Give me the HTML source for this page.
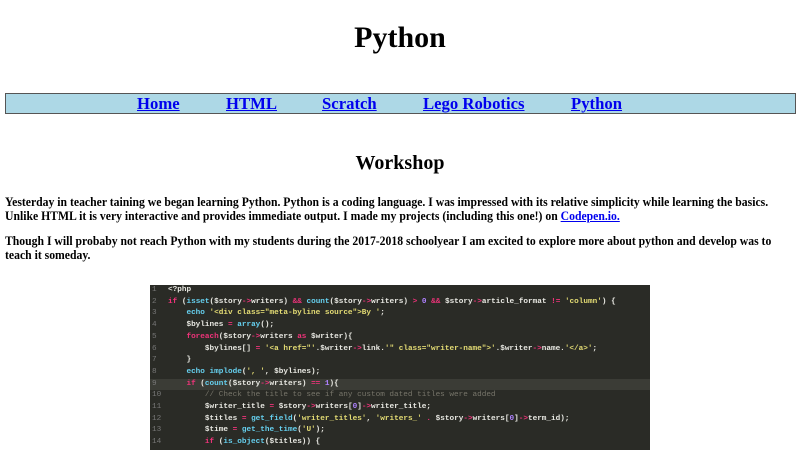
<!DOCTYPE html>
<html><head><meta charset="utf-8"><style>
body{margin:0;background:#fff;font-family:"Liberation Serif",serif;color:#000;width:800px;height:450px;overflow:hidden;position:relative}
h1{position:absolute;top:18px;left:0;width:800px;text-align:center;font-size:30px;margin:0;line-height:40px}
.nav{position:absolute;left:5px;top:93px;width:789px;height:19px;background:#add8e6;border:1px solid #555;}
.nav a{position:absolute;top:0;font-size:16.7px;font-weight:bold;color:#00e;text-decoration:underline;line-height:20px}
h2{position:absolute;top:151px;left:0;width:800px;text-align:center;font-size:20px;margin:0;line-height:24px}
p{position:absolute;left:5px;margin:0;font-size:12.2px;font-weight:bold;line-height:14px;white-space:nowrap;transform:scaleX(0.96);transform-origin:0 0}
p a{color:#00e;text-decoration:underline}
.code{position:absolute;left:150px;top:285px;width:500px;height:165px;background:#2a2b26;font-family:"Liberation Mono",monospace;font-size:7.7px;font-weight:bold;color:#e8e8e2;overflow:hidden}
.l{position:absolute;left:0;width:500px;height:11.7px;line-height:11.7px;white-space:pre}
.n{position:absolute;left:2px;color:#777;width:10px;text-align:left;font-weight:normal}
.t{position:absolute;left:18px}
.k{color:#f0337a}.f{color:#66d0ef}.s{color:#e4dc74}.c{color:#77756a;font-weight:normal}.o{color:#f0337a}.nm{color:#ae81ff}
</style></head><body>
<h1>Python</h1>
<div class="nav">
<a style="left:131px">Home</a><a style="left:220px">HTML</a><a style="left:316px">Scratch</a><a style="left:417px">Lego Robotics</a><a style="left:565px">Python</a>
</div>
<h2>Workshop</h2>
<p style="top:195px">Yesterday in teacher taining we began learning Python. Python is a coding language. I was impressed with its relative simplicity while learning the basics.<br>Unlike HTML it is very interactive and provides immediate output. I made my projects (including this one!) on <a>Codepen.io.</a></p>
<p style="top:234px">Though I will probaby not reach Python with my students during the 2017-2018 schoolyear I am excited to explore more about python and develop was to<br>teach it someday.</p>
<div class="code">
<div class="l" style="top:0"><span class="n">1</span><span class="t">&lt;?php</span></div>
<div class="l" style="top:11.7px"><span class="n">2</span><span class="t"><span class="k">if</span> (<span class="f">isset</span>($story<span class="o">-&gt;</span>writers) <span class="o">&amp;&amp;</span> <span class="f">count</span>($story<span class="o">-&gt;</span>writers) <span class="o">&gt;</span> <span class="nm">0</span> <span class="o">&amp;&amp;</span> $story<span class="o">-&gt;</span>article_format <span class="o">!=</span> <span class="s">'column'</span>) {</span></div>
<div class="l" style="top:23.4px"><span class="n">3</span><span class="t">    <span class="f">echo</span> <span class="s">'&lt;div class="meta-byline source"&gt;By '</span>;</span></div>
<div class="l" style="top:35.1px"><span class="n">4</span><span class="t">    $bylines <span class="o">=</span> <span class="f">array</span>();</span></div>
<div class="l" style="top:46.8px"><span class="n">5</span><span class="t">    <span class="k">foreach</span>($story<span class="o">-&gt;</span>writers <span class="k">as</span> $writer){</span></div>
<div class="l" style="top:58.5px"><span class="n">6</span><span class="t">        $bylines[] <span class="o">=</span> <span class="s">'&lt;a href="'</span>.$writer<span class="o">-&gt;</span>link.<span class="s">'" class="writer-name"&gt;'</span>.$writer<span class="o">-&gt;</span>name.<span class="s">'&lt;/a&gt;'</span>;</span></div>
<div class="l" style="top:70.2px"><span class="n">7</span><span class="t">    }</span></div>
<div class="l" style="top:81.9px"><span class="n">8</span><span class="t">    <span class="f">echo</span> <span class="f">implode</span>(<span class="s">', '</span>, $bylines);</span></div>
<div class="l" style="top:93.6px;background:#3b3c36"><span class="n">9</span><span class="t">    <span class="k">if</span> (<span class="f">count</span>($story<span class="o">-&gt;</span>writers) <span class="o">==</span> <span class="nm">1</span>){</span></div>
<div class="l" style="top:105.3px"><span class="n">10</span><span class="t">        <span class="c">// Check the title to see if any custom dated titles were added</span></span></div>
<div class="l" style="top:117px"><span class="n">11</span><span class="t">        $writer_title <span class="o">=</span> $story<span class="o">-&gt;</span>writers[<span class="nm">0</span>]<span class="o">-&gt;</span>writer_title;</span></div>
<div class="l" style="top:128.7px"><span class="n">12</span><span class="t">        $titles <span class="o">=</span> <span class="f">get_field</span>(<span class="s">'writer_titles'</span>, <span class="s">'writers_'</span> <span class="o">.</span> $story<span class="o">-&gt;</span>writers[<span class="nm">0</span>]<span class="o">-&gt;</span>term_id);</span></div>
<div class="l" style="top:140.4px"><span class="n">13</span><span class="t">        $time <span class="o">=</span> <span class="f">get_the_time</span>(<span class="s">'U'</span>);</span></div>
<div class="l" style="top:152.1px"><span class="n">14</span><span class="t">        <span class="k">if</span> (<span class="f">is_object</span>($titles)) {</span></div>
</div>
</body></html>
